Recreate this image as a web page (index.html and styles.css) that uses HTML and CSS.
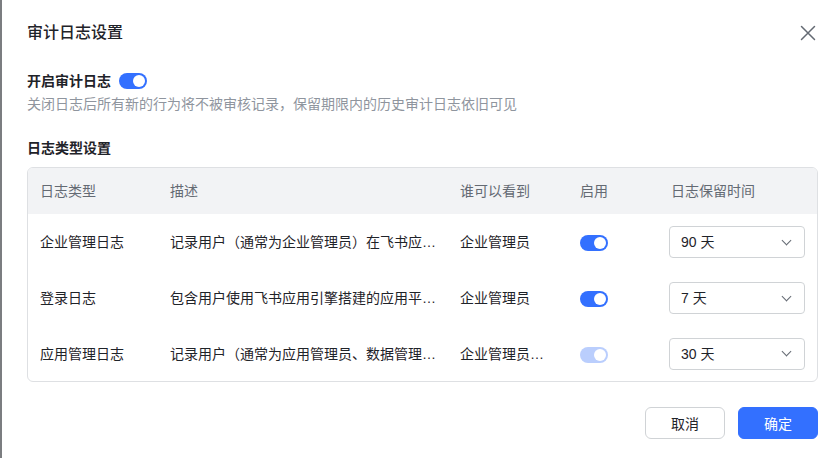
FILE: index.html
```html
<!DOCTYPE html>
<html lang="zh-CN">
<head>
  <meta charset="UTF-8" />
  <meta name="viewport" content="width=device-width, initial-scale=1.0"/>
  <title>审计日志设置</title>
  <link rel="stylesheet" href="styles.css">
</head>
<body>

<div class="backdrop"></div>

<div class="modal">
  <div class="modal-header">
    <h2>审计日志设置</h2>
    <button class="close-btn" aria-label="关闭">
      <svg width="16" height="16" viewBox="0 0 16 16">
        <path d="M1.5 1.5 L14.5 14.5 M14.5 1.5 L1.5 14.5" stroke="#646a73" stroke-width="1.5" stroke-linecap="round" fill="none"/>
      </svg>
    </button>
  </div>

  <div class="switch-row">
    <span class="switch-label">开启审计日志</span>
    <span class="switch on"></span>
  </div>
  <p class="hint">关闭日志后所有新的行为将不被审核记录，保留期限内的历史审计日志依旧可见</p>

  <h3 class="section-title">日志类型设置</h3>

  <div class="table-wrap">
    <table>
      <colgroup>
        <col style="width:130px">
        <col style="width:290px">
        <col style="width:120px">
        <col style="width:91px">
        <col>
      </colgroup>
      <thead>
        <tr>
          <th>日志类型</th>
          <th>描述</th>
          <th>谁可以看到</th>
          <th>启用</th>
          <th>日志保留时间</th>
        </tr>
      </thead>
      <tbody>
        <tr>
          <td>企业管理日志</td>
          <td>记录用户（通常为企业管理员）在飞书应用引擎管理后台的操作行为</td>
          <td>企业管理员</td>
          <td><span class="switch on"></span></td>
          <td><div class="select"><span>90 天</span><i class="chevron"></i></div></td>
        </tr>
        <tr>
          <td>登录日志</td>
          <td>包含用户使用飞书应用引擎搭建的应用平台的登录行为</td>
          <td>企业管理员</td>
          <td><span class="switch on"></span></td>
          <td><div class="select"><span>7 天</span><i class="chevron"></i></div></td>
        </tr>
        <tr>
          <td>应用管理日志</td>
          <td>记录用户（通常为应用管理员、数据管理员）在应用内的操作行为</td>
          <td>企业管理员、应用管理员</td>
          <td><span class="switch on disabled"></span></td>
          <td><div class="select"><span>30 天</span><i class="chevron"></i></div></td>
        </tr>
      </tbody>
    </table>
  </div>

  <div class="modal-footer">
    <button class="btn">取消</button>
    <button class="btn primary">确定</button>
  </div>
</div>

</body>
</html>
```

FILE: styles.css
```css
* {
  box-sizing: border-box;
}

body {
  margin: 0;
  height: 458px;
  display: flex;
  font-family: "Liberation Sans", "Noto Sans CJK SC", sans-serif;
  font-size: 14px;
  color: #1f2329;
  background: #fff;
  overflow: hidden;
}

.backdrop {
  width: 2px;
  background: #7b7d80;
}

.modal {
  flex: 1;
  background: #fff;
  padding: 20px 11px 0 25px;
}

.modal-header {
  display: flex;
  align-items: center;
  justify-content: space-between;
  height: 26px;
}

h2 {
  margin: 0;
  font-size: 16px;
  font-weight: 500;
  line-height: 26px;
}

.close-btn {
  border: none;
  background: none;
  padding: 0;
  width: 16px;
  height: 16px;
  margin-right: 2px;
  cursor: pointer;
}

.close-btn svg {
  display: block;
}

.switch-row {
  display: flex;
  align-items: center;
  gap: 8px;
  margin-top: 24px;
  height: 22px;
}

.switch-label {
  font-weight: 600;
  line-height: 22px;
}

.switch {
  display: inline-block;
  position: relative;
  width: 28px;
  height: 16px;
  border-radius: 8px;
  background: #bbbfc4;
  vertical-align: middle;
}

.switch::after {
  content: "";
  position: absolute;
  top: 2px;
  left: 2px;
  width: 12px;
  height: 12px;
  border-radius: 50%;
  background: #fff;
}

.switch.on {
  background: #3370ff;
}

.switch.on::after {
  left: 14px;
}

.switch.on.disabled {
  background: #bacefd;
}

.hint {
  margin: 1px 0 0;
  font-size: 14px;
  line-height: 22px;
  color: #8f959e;
}

.section-title {
  margin: 22px 0 0;
  font-size: 14px;
  font-weight: 600;
  line-height: 22px;
}

.table-wrap {
  margin-top: 8px;
  border: 1px solid #dee0e3;
  border-radius: 6px;
  overflow: hidden;
}

table {
  width: 100%;
  border-collapse: collapse;
  table-layout: fixed;
}

th, td {
  padding: 0 12px;
  text-align: left;
  white-space: nowrap;
  overflow: hidden;
  text-overflow: ellipsis;
  line-height: 22px;
}

th {
  height: 46px;
  background: #f2f3f5;
  font-weight: 400;
  color: #646a73;
}

td {
  height: 56px;
}

tbody tr:last-child td {
  height: 55px;
}

.select {
  display: flex;
  align-items: center;
  justify-content: space-between;
  width: 136px;
  height: 32px;
  margin-left: -2px;
  padding: 0 14px 0 11px;
  border: 1px solid #d0d3d6;
  border-radius: 4px;
  background: #fff;
}

.chevron {
  width: 7px;
  height: 7px;
  border-right: 1.5px solid #646a73;
  border-bottom: 1.5px solid #646a73;
  transform: rotate(45deg);
  margin-top: -4px;
}

.modal-footer {
  display: flex;
  justify-content: flex-end;
  gap: 13px;
  margin-top: 25px;
}

.btn {
  width: 80px;
  height: 32px;
  border: 1px solid #d0d3d6;
  border-radius: 6px;
  background: #fff;
  font-family: inherit;
  font-size: 14px;
  color: #1f2329;
  cursor: pointer;
}

.btn.primary {
  background: #3370ff;
  border-color: #3370ff;
  color: #fff;
}
```
